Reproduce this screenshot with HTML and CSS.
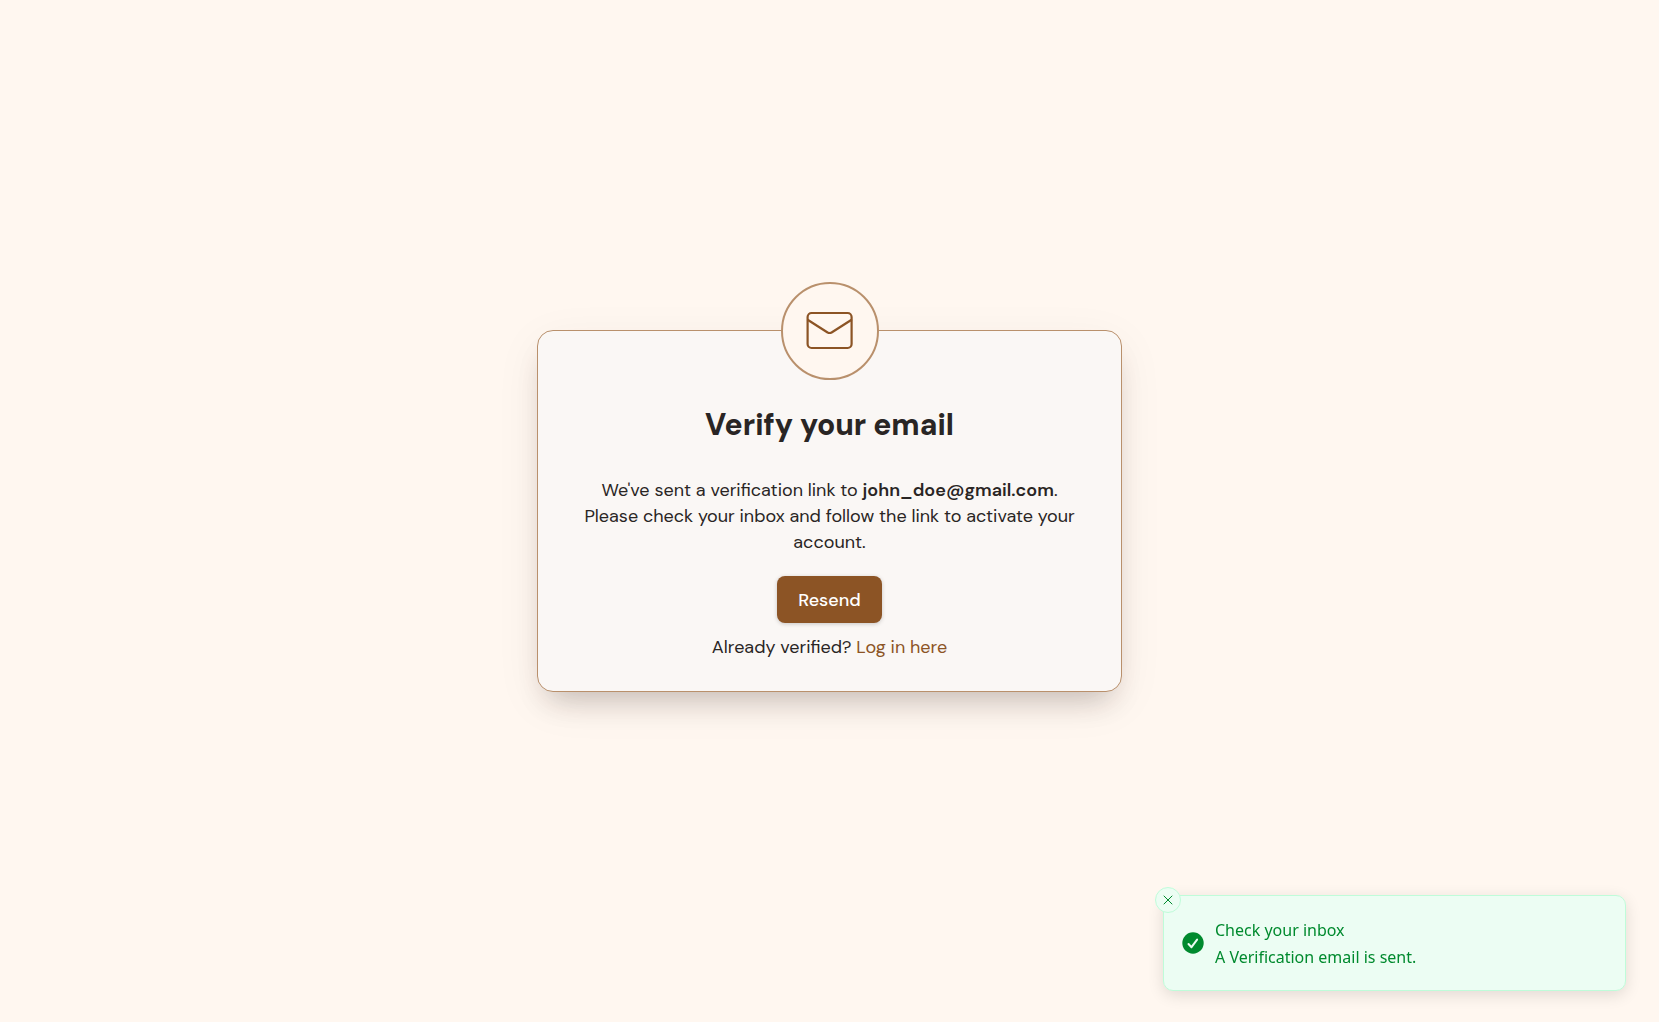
FILE: index.html
```html
<!DOCTYPE html>
<html lang="en">
<head>
<meta charset="utf-8">
<meta name="viewport" content="width=device-width, initial-scale=1">
<title>Verify your email</title>
<link rel="stylesheet" href="styles.css">
</head>
<body>
<main class="page">
  <section class="card" aria-labelledby="card-title">
    <div class="card-icon">
      <svg width="48" height="48" viewBox="0 0 48 48" fill="none" stroke="currentColor" stroke-width="2.200" stroke-linecap="round" stroke-linejoin="round" aria-hidden="true">
        <rect x="1.600" y="6" width="44" height="35" rx="4"/>
        <path d="M2 13l19.600 12.500q2 1 4 0l19.600-12.500"/>
      </svg>
    </div>
    <h1 class="title" id="card-title">Verify your email</h1>
    <p class="message">We've sent a verification link to <strong>john_doe@gmail.com</strong>.<br>Please check your inbox and follow the link to activate your account.</p>
    <button class="resend" type="button">Resend</button>
    <p class="login">Already verified? <a href="#login">Log in here</a></p>
  </section>
</main>
<div class="toast" role="status">
  <button class="toast-close" type="button" aria-label="Close">
    <svg width="12" height="12" viewBox="0 0 12 12" fill="none" stroke="currentColor" stroke-width="1" stroke-linecap="round" aria-hidden="true"><path d="M2 2l8 8M10 2l-8 8"/></svg>
  </button>
  <svg class="toast-icon" width="22" height="22" viewBox="0 0 22 22" aria-hidden="true">
    <circle cx="11" cy="11" r="10.700" fill="currentColor"/>
    <path d="M6.500 12l3 3.200 5.600-7.600" fill="none" stroke="#ecfdf3" stroke-width="2" stroke-linecap="round" stroke-linejoin="round"/>
  </svg>
  <div class="toast-text">
    <p>Check your inbox</p>
    <p>A Verification email is sent.</p>
  </div>
</div>
</body>
</html>
```
FILE: styles.css
```css
* {
  box-sizing: border-box;
}

body {
  margin: 0;
  background: #fff7f0;
  color: #292524;
  font-family: "DM Sans", "Open Sans", sans-serif;
  font-size: 18px;
  line-height: 26px;
}

h1,
p {
  margin: 0;
}

.page {
  min-height: 100vh;
  display: flex;
  align-items: center;
  justify-content: center;
}

.card {
  position: relative;
  width: 100%;
  max-width: 585px;
  padding: 74px 40px 31px;
  display: flex;
  flex-direction: column;
  align-items: center;
  text-align: center;
  background: #faf7f5;
  border: 1px solid #b9906c;
  border-radius: 16px;
  box-shadow: 0 18px 30px -12px rgba(30, 20, 15, 0.24), 0 12px 48px rgba(60, 20, 0, 0.06);
}

/* Badge straddling the card's top edge */
.card-icon {
  position: absolute;
  top: 0;
  left: 50%;
  width: 98px;
  height: 98px;
  transform: translate(-50%, -50%);
  display: flex;
  align-items: center;
  justify-content: center;
  border: 2px solid #b9906c;
  border-radius: 50%;
  background: #fff7f0;
  color: #8c5425;
}

.title {
  margin-bottom: 32px;
  font-size: 30px;
  line-height: 40px;
  font-weight: 800;
}

.message {
  margin-bottom: 21px;
}

.message strong {
  font-weight: 600;
}

.resend {
  height: 47px;
  margin-bottom: 11px;
  padding: 0 21px;
  border: 0;
  border-radius: 8px;
  background: #8c5425;
  color: #fff;
  font: inherit;
  font-weight: 500;
  box-shadow: 0 1px 4px rgba(0, 0, 0, 0.2);
}

.login a {
  color: #8c5425;
  text-decoration: none;
}

.toast {
  position: fixed;
  right: 33px;
  bottom: 31px;
  width: 463px;
  padding: 19px 18px;
  display: flex;
  align-items: center;
  gap: 11px;
  background: #ecfdf3;
  border: 1px solid #bffcd9;
  border-radius: 10px;
  color: #008a2e;
  font-family: "Noto Sans", sans-serif;
  font-size: 16px;
  line-height: 27px;
  box-shadow: 0 4px 16px rgba(0, 0, 0, 0.12);
}

.toast-close {
  position: absolute;
  top: 4px;
  left: 4px;
  width: 26px;
  height: 26px;
  padding: 0;
  transform: translate(-50%, -50%);
  display: flex;
  align-items: center;
  justify-content: center;
  border: 1px solid #bffcd9;
  border-radius: 50%;
  background: #ecfdf3;
  color: #008a2e;
}

.toast-icon {
  flex: none;
}

.toast-text {
  padding-top: 2px;
}
```
